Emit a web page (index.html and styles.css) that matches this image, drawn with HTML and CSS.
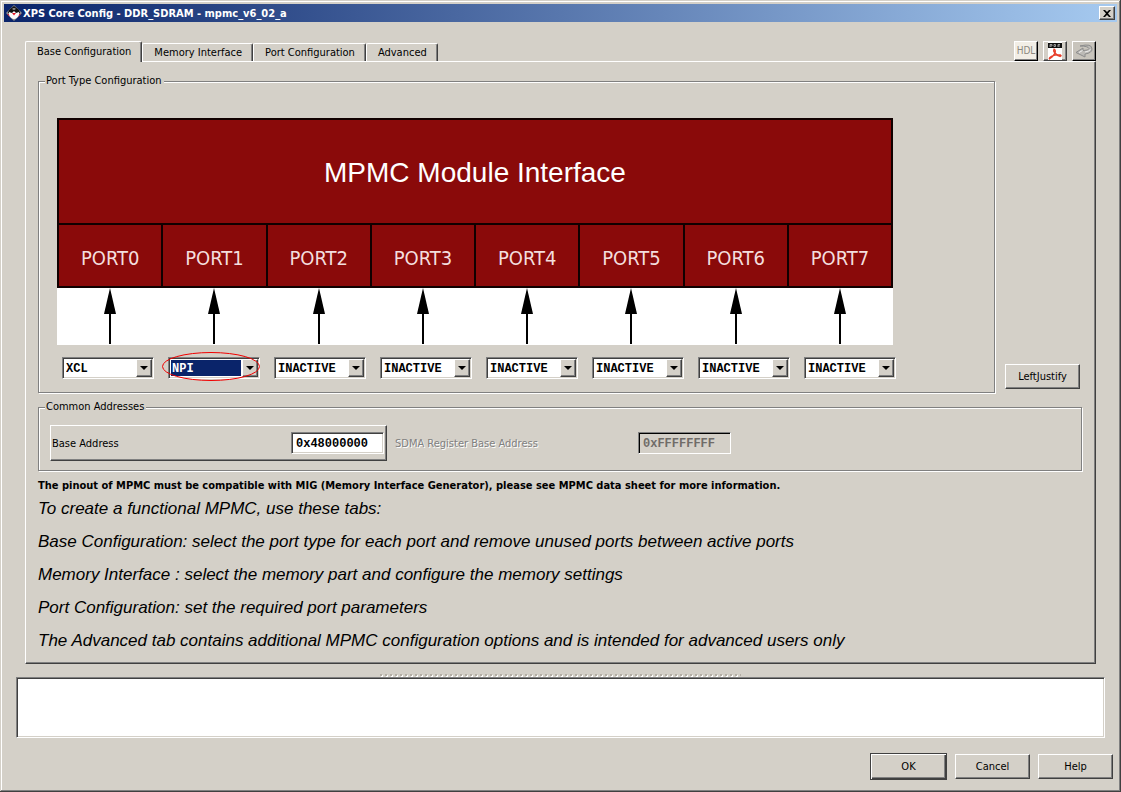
FILE: index.html
```html
<!DOCTYPE html>
<html lang="en">
<head>
<meta charset="utf-8">
<title>XPS Core Config - DDR_SDRAM - mpmc_v6_02_a</title>
<link rel="stylesheet" href="styles.css">
</head>
<body>
<main class="window">
  <header class="titlebar">
    <svg class="app-icon" viewBox="0 0 16 16" aria-hidden="true">
      <path d="M8 0 16 8 8 16 0 8Z" fill="#8c8c8c"/>
      <path d="M8 1 13 5 14 8H2L3 5Z" fill="#101010"/>
      <path d="M1 9h14l-3 3H4Z" fill="#d02038"/>
      <path d="M3 7 6 8 8 6 10 8 13 7V10Q11 14 8 14T3 10Z" fill="#fafafa"/>
      <path d="M6 4Q8 2 10 4L8 5Z" fill="#999"/>
      <path d="M6 8h4l-2 2.500Z" fill="#e01020"/>
    </svg>
    <h1 class="title">XPS Core Config - DDR_SDRAM - mpmc_v6_02_a</h1>
    <button class="close" type="button" aria-label="Close">
      <svg viewBox="0 0 8 7" width="8" height="7"><path d="M0 0h2l2 2 2-2h2L5 3.500 8 7H6L4 5 2 7H0l3-3.500Z" fill="#000"/></svg>
    </button>
  </header>

  <div class="content">
    <div class="tab-row">
      <div class="tabs" role="tablist">
        <button class="tab active" type="button" role="tab" aria-selected="true">Base Configuration</button>
        <button class="tab" type="button" role="tab" aria-selected="false">Memory Interface</button>
        <button class="tab" type="button" role="tab" aria-selected="false">Port Configuration</button>
        <button class="tab" type="button" role="tab" aria-selected="false">Advanced</button>
      </div>
      <div class="tools">
        <button class="tool hdl" type="button">HDL</button>
        <button class="tool pdf" type="button" aria-label="Open PDF">
          <svg viewBox="0 0 20 18" width="20" height="18">
            <path d="M3 0h14v18H3Z" fill="#fff"/>
            <path d="M3 1h14v5H3Z" fill="#111"/>
            <path d="M5 5V2.500h2V4H5M9 2.500v2h1.500v-2ZM13 5V2.500h2M13 4h2" fill="none" stroke="#bbb" stroke-width=".8"/>
            <path d="M9 7q2 1 1 4-2 4-5.500 6-1-1 2.500-3 4-1.500 8.500-1 1.500 1-.5 1.500-3-1-5.500-4-1.500-2-.5-3.500Z" fill="none" stroke="#e8402c" stroke-width="1.300"/>
          </svg>
        </button>
        <button class="tool revert" type="button" aria-label="Revert">
          <svg viewBox="0 0 20 18" width="20" height="18">
            <path d="M6 4Q18 1 18 7q0 4-7 5v3L2 10.500 9 6v2.500q6 0 6-2Q14 4 6 4Z" fill="#bcbab6" stroke="#8c8c8c"/>
            <path d="M5 10.500 8.500 8.500M11 10q4-.5 5.500-2.500" fill="none" stroke="#eee"/>
          </svg>
        </button>
      </div>
    </div>

    <section class="panel">
      <div class="port-row">
        <fieldset class="group ports">
          <legend>Port Type Configuration</legend>
          <div class="diagram">
            <div class="module">MPMC Module Interface</div>
            <div class="port-cells">
              <span>PORT0</span><span>PORT1</span><span>PORT2</span><span>PORT3</span><span>PORT4</span><span>PORT5</span><span>PORT6</span><span>PORT7</span>
            </div>
            <div class="arrows">
              <svg viewBox="0 0 14 57"><path d="M7 0 13 26H1Z"/><path d="M6 26h2v30H6Z"/></svg>
              <svg viewBox="0 0 14 57"><path d="M7 0 13 26H1Z"/><path d="M6 26h2v30H6Z"/></svg>
              <svg viewBox="0 0 14 57"><path d="M7 0 13 26H1Z"/><path d="M6 26h2v30H6Z"/></svg>
              <svg viewBox="0 0 14 57"><path d="M7 0 13 26H1Z"/><path d="M6 26h2v30H6Z"/></svg>
              <svg viewBox="0 0 14 57"><path d="M7 0 13 26H1Z"/><path d="M6 26h2v30H6Z"/></svg>
              <svg viewBox="0 0 14 57"><path d="M7 0 13 26H1Z"/><path d="M6 26h2v30H6Z"/></svg>
              <svg viewBox="0 0 14 57"><path d="M7 0 13 26H1Z"/><path d="M6 26h2v30H6Z"/></svg>
              <svg viewBox="0 0 14 57"><path d="M7 0 13 26H1Z"/><path d="M6 26h2v30H6Z"/></svg>
            </div>
          </div>
          <div class="combos">
            <div class="combo"><select aria-label="Port 0 type"><option>XCL</option></select><span class="drop"></span></div>
            <div class="combo selected"><select aria-label="Port 1 type"><option>NPI</option></select><span class="drop"></span>
              <svg class="mark" viewBox="0 0 98 29"><ellipse cx="49" cy="14.500" rx="48.500" ry="14" fill="none" stroke="#f00000"/></svg></div>
            <div class="combo"><select aria-label="Port 2 type"><option>INACTIVE</option></select><span class="drop"></span></div>
            <div class="combo"><select aria-label="Port 3 type"><option>INACTIVE</option></select><span class="drop"></span></div>
            <div class="combo"><select aria-label="Port 4 type"><option>INACTIVE</option></select><span class="drop"></span></div>
            <div class="combo"><select aria-label="Port 5 type"><option>INACTIVE</option></select><span class="drop"></span></div>
            <div class="combo"><select aria-label="Port 6 type"><option>INACTIVE</option></select><span class="drop"></span></div>
            <div class="combo"><select aria-label="Port 7 type"><option>INACTIVE</option></select><span class="drop"></span></div>
          </div>
        </fieldset>
        <button class="button" type="button">LeftJustify</button>
      </div>

      <fieldset class="group addresses">
        <legend>Common Addresses</legend>
        <div class="address-row">
          <div class="address raised">
            <label for="base">Base Address</label>
            <input id="base" type="text" value="0x48000000">
          </div>
          <div class="address disabled">
            <label for="sdma">SDMA Register Base Address</label>
            <input id="sdma" type="text" value="0xFFFFFFFF" disabled>
          </div>
        </div>
      </fieldset>

      <p class="notice">The pinout of MPMC must be compatible with MIG (Memory Interface Generator), please see MPMC data sheet for more information.</p>
      <div class="help">
        <p>To create a functional MPMC, use these tabs:</p>
        <p>Base Configuration: select the port type for each port and remove unused ports between active ports</p>
        <p>Memory Interface : select the memory part and configure the memory settings</p>
        <p>Port Configuration: set the required port parameters</p>
        <p>The Advanced tab contains additional MPMC configuration options and is intended for advanced users only</p>
      </div>
    </section>
  </div>

  <div class="splitter"></div>
  <textarea class="log" aria-label="Messages" readonly></textarea>

  <footer class="actions">
    <button class="button default" type="button">OK</button>
    <button class="button" type="button">Cancel</button>
    <button class="button" type="button">Help</button>
  </footer>
</main>
</body>
</html>
```
FILE: styles.css
```css
:root {
  --face: #d4d0c8;
  --shadow: #808080;
  --dark: #404040;
  --ui: "DejaVu Sans Condensed", "DejaVu Sans", sans-serif;
  --mono: "Liberation Mono", monospace;
}

* { box-sizing: border-box; }

body {
  margin: 0;
  background: var(--face);
  color: #000;
  font: 11px/14px var(--ui);
}

button, input, select, textarea {
  margin: 0;
  font: inherit;
  color: inherit;
  border-radius: 0;
}

p, h1 { margin: 0; }

.window {
  display: flex;
  flex-direction: column;
  min-height: 100vh;
  padding: 4px;
  background: var(--face);
  box-shadow: inset -1px -1px var(--dark), inset 1px 1px var(--face),
    inset -2px -2px var(--shadow), inset 2px 2px #fff;
}

.titlebar {
  display: flex;
  align-items: center;
  height: 18px;
  padding: 0 2px;
  background: linear-gradient(90deg, #0a246a, #a6caf0);
  color: #fff;
}

.app-icon { width: 16px; height: 16px; }

.title {
  flex: 1;
  margin-left: 1px;
  padding-top: 1px;
  font-size: 11px;
  font-weight: bold;
}

.close {
  display: flex;
  align-items: center;
  justify-content: center;
  width: 16px;
  height: 14px;
  padding: 0;
  background: var(--face);
  border: 1px solid;
  border-color: #fff var(--dark) var(--dark) #fff;
  box-shadow: inset -1px -1px var(--shadow);
}

.content { padding: 19px 21px 0; }

.tab-row {
  display: flex;
  justify-content: space-between;
  align-items: flex-end;
}

.tabs {
  display: flex;
  align-items: flex-end;
}

.tab {
  height: 18px;
  padding: 1px 10px 0 11px;
  background: var(--face);
  border: 1px solid;
  border-color: #fff var(--dark) transparent #fff;
  border-bottom: 0;
  border-radius: 2px 2px 0 0;
  box-shadow: inset -1px 0 var(--shadow);
  white-space: nowrap;
}

.tab.active {
  z-index: 1;
  height: 21px;
  margin-bottom: -1px;
  padding: 0 10px 0 11px;
}

.tools {
  display: flex;
  gap: 5px;
}

.tool {
  display: flex;
  align-items: center;
  justify-content: center;
  width: 24px;
  height: 20px;
  padding: 0;
  background: var(--face);
  border: 1px solid;
  border-color: #fff #000 #000 #fff;
  box-shadow: inset -1px -1px var(--shadow);
}

.tool.hdl {
  background: #f2eee6;
  color: #8c8880;
  font-size: 10px;
}

.tool.pdf { border-color: #fff var(--dark) var(--dark) #fff; }

.tool.revert { background: #c8c4bc; }

.panel {
  padding: 12px 13px 10px 12px;
  border: 1px solid;
  border-color: #fff var(--dark) var(--dark) #fff;
  box-shadow: inset -1px -1px var(--shadow);
}

.group {
  min-width: 0;
  margin: 0;
  border: 1px solid var(--shadow);
  box-shadow: 1px 1px #fff, inset 1px 1px #fff;
}

.group legend {
  padding: 0 2px 0 1px;
  background: var(--face);
}

.port-row {
  display: flex;
  align-items: flex-end;
  gap: 10px;
  padding-right: 2px;
}

.ports {
  flex: 1;
  padding: 30px 18px 13px;
}

.ports legend { margin-left: -12px; }
.addresses legend { margin-left: -5px; }

.port-row > .button { margin-bottom: 4px; }

.diagram {
  max-width: 836px;
  background: #fff;
}

.module {
  display: flex;
  align-items: center;
  justify-content: center;
  height: 105px;
  padding-top: 2px;
  background: #8a0a0a;
  border: 2px solid #100000;
  border-bottom: 0;
  color: #fff;
  font: 28px/32px "Liberation Sans", Arial, sans-serif;
}

.port-cells {
  display: grid;
  grid-template-columns: repeat(8, 1fr);
  gap: 2px;
  border: 2px solid #100000;
  background: #100000;
}

.port-cells span {
  padding: 21px 0 16px;
  background: #8a0a0a;
  color: #f4dede;
  font-size: 20px;
  line-height: 24px;
  text-align: center;
}

.arrows {
  display: grid;
  grid-template-columns: repeat(8, 1fr);
  justify-items: center;
  padding: 0 1px;
}

.arrows svg {
  display: block;
  width: 14px;
  height: 57px;
}

.combos {
  display: grid;
  grid-template-columns: repeat(8, 92px);
  gap: 14px;
  margin: 12px 0 0 5px;
}

.combo { position: relative; }

.combo select {
  display: block;
  width: 100%;
  height: 22px;
  padding: 1px 18px 0 3px;
  appearance: none;
  background: #fff;
  border: 1px solid;
  border-color: var(--shadow) #fff #fff var(--shadow);
  box-shadow: inset 1px 1px var(--dark), inset -1px -1px var(--face);
  font: bold 12px/18px var(--mono);
}

.combo.selected select {
  background: linear-gradient(#0a246a, #0a246a) 2px 2px / 70px 16px no-repeat #fff;
  color: #fff;
}

.combo.selected option { color: #000; }

.drop {
  position: absolute;
  top: 2px;
  right: 2px;
  display: flex;
  align-items: center;
  justify-content: center;
  width: 16px;
  height: 18px;
  background: var(--face);
  border: 1px solid;
  border-color: #fff var(--dark) var(--dark) #fff;
  box-shadow: inset -1px -1px var(--shadow);
  pointer-events: none;
}

.drop::after {
  content: "";
  border: 4px solid transparent;
  border-top-color: #000;
  border-bottom: 0;
}

.mark {
  position: absolute;
  top: -5px;
  left: -6px;
  width: 98px;
  height: 29px;
  pointer-events: none;
}

.button {
  min-width: 75px;
  height: 25px;
  padding: 0 8px;
  background: var(--face);
  border: 1px solid;
  border-color: #fff var(--dark) var(--dark) #fff;
  box-shadow: inset -1px -1px var(--shadow);
}

.button.default {
  min-width: 77px;
  height: 27px;
  border-color: var(--dark);
  box-shadow: inset 1px 1px #fff, inset -1px -1px var(--dark), inset -2px -2px var(--shadow);
}

.addresses {
  margin-top: 7px;
  padding: 11px 11px 9px;
}

.address-row {
  display: flex;
  gap: 7px;
}

.address {
  display: flex;
  align-items: center;
  justify-content: space-between;
  width: 337px;
  height: 36px;
  padding: 0 2px 0 1px;
  border: 1px solid transparent;
}

.address label { padding-top: 1px; }

.raised {
  border-color: #fff var(--dark) var(--dark) #fff;
  box-shadow: inset -1px -1px var(--shadow);
}

.address input {
  width: 93px;
  height: 22px;
  padding: 1px 4px 0;
  background: #fff;
  border: 1px solid;
  border-color: var(--shadow) #fff #fff var(--shadow);
  box-shadow: inset 1px 1px var(--dark), inset -1px -1px var(--face);
  font: bold 12px/18px var(--mono);
}

.address.disabled {
  width: 338px;
  padding: 0;
  color: var(--shadow);
  text-shadow: 1px 1px #fff;
}

.disabled input {
  background: var(--face);
  box-shadow: inset 1px 1px #000;
  color: #706c68;
}

.notice {
  margin-top: 8px;
  font-weight: bold;
}

.help {
  display: grid;
  gap: 9px;
  margin-top: 4px;
  font: italic 17px/24px "Liberation Sans", Arial, sans-serif;
}

.splitter {
  width: 361px;
  height: 3px;
  margin: 10px auto 0;
  background:
    repeating-linear-gradient(90deg, #b4afa5 0 2px, transparent 2px 5px) 0 0 / 100% 2px no-repeat,
    repeating-linear-gradient(90deg, transparent 0 1px, #fff 1px 3px, transparent 3px 5px) 0 1px / 100% 2px no-repeat;
}

.log {
  display: block;
  height: 61px;
  margin: 0 12px;
  background: #fff;
  border: 1px solid;
  border-color: var(--shadow) #fff #fff var(--shadow);
  box-shadow: inset 1px 1px var(--dark), inset -1px -1px var(--face);
  resize: none;
}

.actions {
  display: flex;
  align-items: center;
  justify-content: flex-end;
  gap: 8px;
  padding: 15px 4px 0;
}
```
